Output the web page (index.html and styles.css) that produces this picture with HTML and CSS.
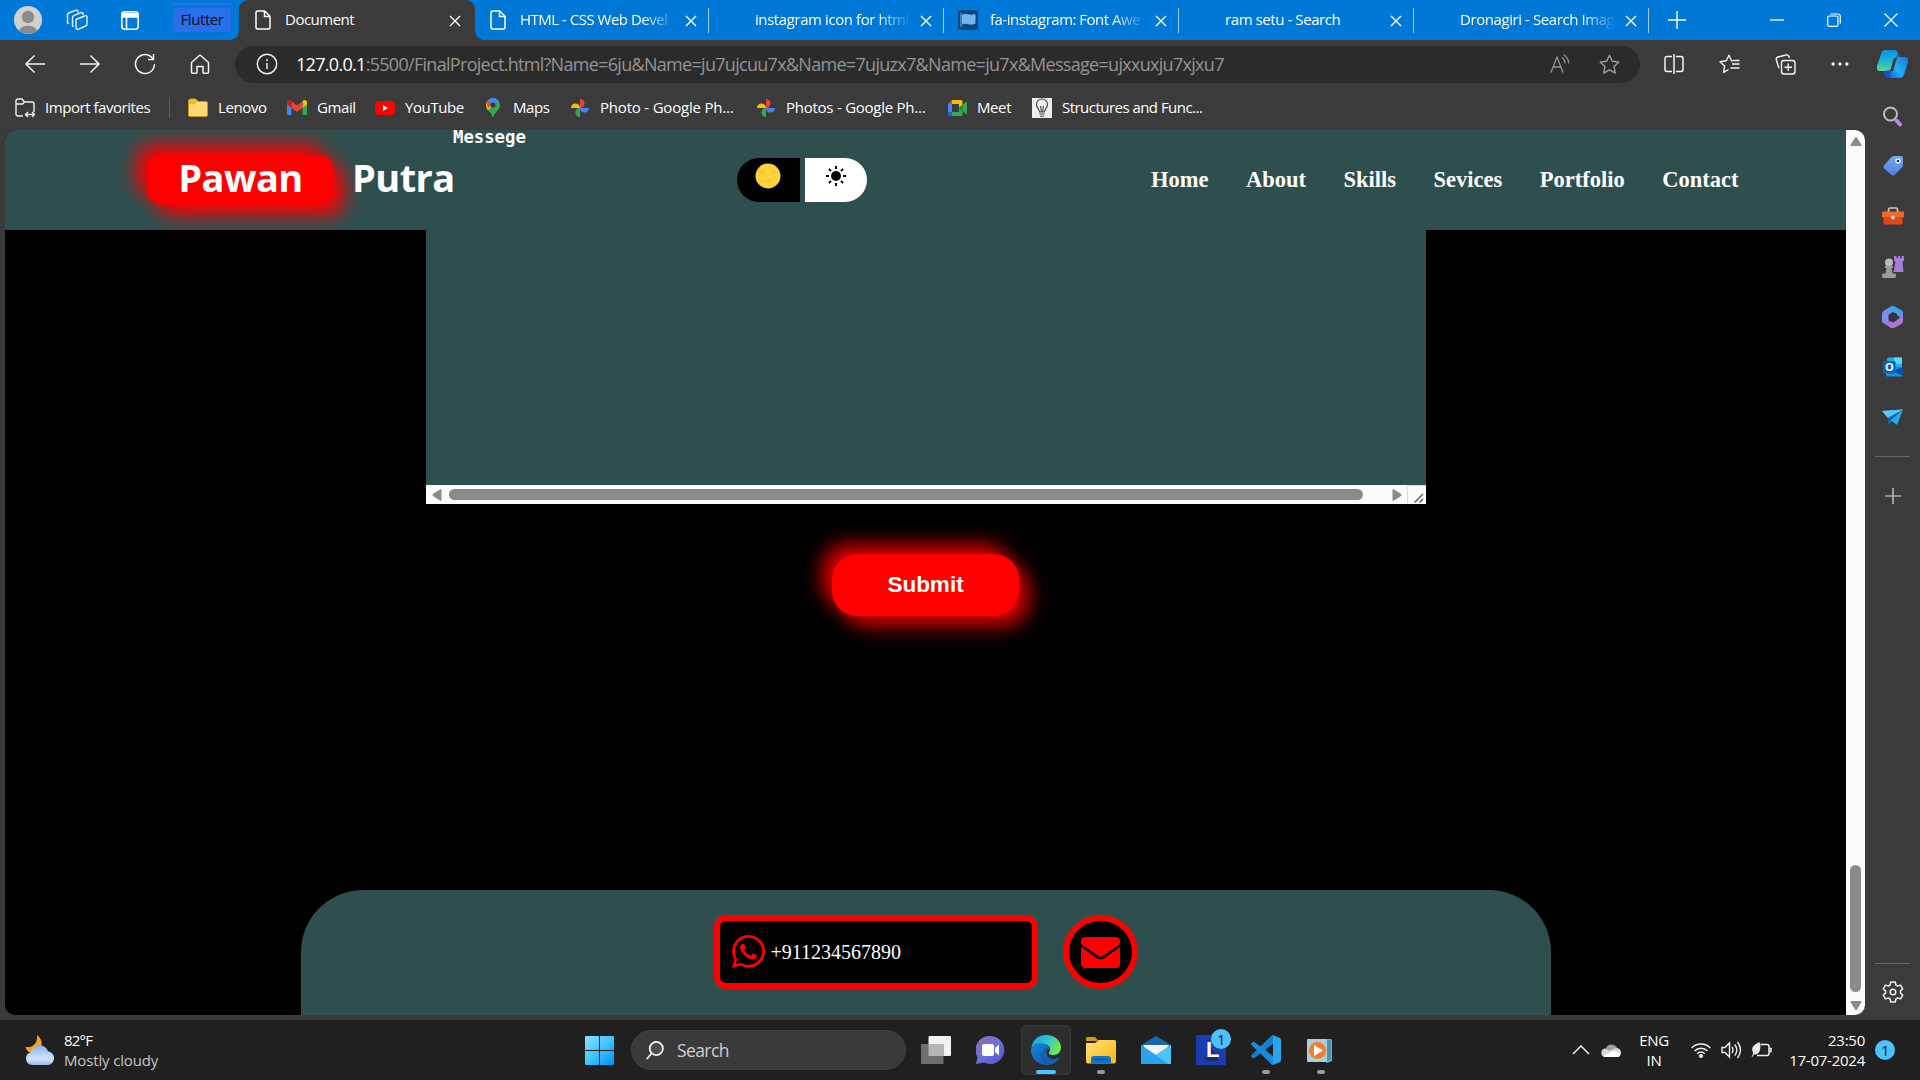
FILE: index.html
```html
<!DOCTYPE html>
<html lang="en">
<head>
<meta charset="utf-8">
<title>Document</title>
<link rel="stylesheet" href="styles.css">
</head>
<body>
<svg class="defs" width="0" height="0">
  <defs>
    <linearGradient id="gWin" x1="0" y1="0" x2="1" y2="1"><stop offset="0" stop-color="#8be3ff"/><stop offset=".5" stop-color="#3fc4ff"/><stop offset="1" stop-color="#0091f8"/></linearGradient>
    <linearGradient id="gEdgeA" x1="0" y1="0" x2="1" y2=".4"><stop offset="0" stop-color="#1b9de2"/><stop offset=".55" stop-color="#2cc3d5"/><stop offset="1" stop-color="#6fe856"/></linearGradient>
    <linearGradient id="gEdgeB" x1="0" y1="0" x2=".7" y2="1"><stop offset="0" stop-color="#1688d8"/><stop offset="1" stop-color="#0f5bb0"/></linearGradient>
    <linearGradient id="gChat" x1="0" y1="0" x2="1" y2="1"><stop offset="0" stop-color="#9a67a8"/><stop offset=".5" stop-color="#6a72dd"/><stop offset="1" stop-color="#5a4fc8"/></linearGradient>
    <linearGradient id="gCloud" x1="0" y1="0" x2="0" y2="1"><stop offset="0" stop-color="#8db4f5"/><stop offset=".7" stop-color="#d3e2fa"/><stop offset="1" stop-color="#94b5ee"/></linearGradient>
    <linearGradient id="gFolder" x1="0" y1="0" x2="1" y2="1"><stop offset="0" stop-color="#ffe07a"/><stop offset="1" stop-color="#f8b70c"/></linearGradient>
    <linearGradient id="gCopA" x1="0" y1="0" x2="0" y2="1"><stop offset="0" stop-color="#0f8fe0"/><stop offset=".5" stop-color="#18b2d8"/><stop offset="1" stop-color="#5fd68d"/></linearGradient>
    <linearGradient id="gCopB" x1="1" y1="0" x2="0" y2="1"><stop offset="0" stop-color="#1d72e0"/><stop offset=".6" stop-color="#20b2f8"/><stop offset="1" stop-color="#1b62e8"/></linearGradient>
    <linearGradient id="gTag" x1="0" y1="0" x2="0" y2="1"><stop offset="0" stop-color="#7aa7f0"/><stop offset="1" stop-color="#4f7fd9"/></linearGradient>
    <symbol id="x" viewBox="0 0 12 12"><path d="M1 1l10 10M11 1L1 11" fill="none" stroke="#fff" stroke-width="1.4"/></symbol>
    <symbol id="doc" viewBox="0 0 16 20"><path d="M2.5 1h7.2L15 6.2v11.3a1.5 1.5 0 0 1-1.5 1.5h-11A1.500 1.500 0 0 1 1 17.500v-15A1.500 1.500 0 0 1 2.500 1zM9.500 1v5.500H15" fill="none" stroke="#fff" stroke-width="1.500"/></symbol>
    <symbol id="mag" viewBox="0 0 20 20"><circle cx="8.500" cy="8.500" r="5" fill="none" stroke="#0474d1" stroke-width="1.600"/><path d="M12.500 12.500l5 5" stroke="#0474d1" stroke-width="1.600"/></symbol>
    <symbol id="photos" viewBox="0 0 20 20"><path d="M10 10V1a4.500 4.500 0 0 1 0 9z" fill="#ea4335"/><path d="M10 10h9a4.500 4.500 0 0 1-9 0z" fill="#4285f4"/><path d="M10 10v9a4.500 4.500 0 0 1 0-9z" fill="#34a853"/><path d="M10 10H1a4.500 4.500 0 0 1 9 0z" fill="#fbbc04"/></symbol>
  </defs>
</svg>

<div class="browser">
  <header class="tabstrip">
    <div class="profile"><svg width="28" height="28" viewBox="0 0 28 28"><circle cx="14" cy="14" r="14" fill="#d3d1ce"/><circle cx="14" cy="11" r="6.200" fill="#8d8b89"/><path d="M5 24.500a9.500 7 0 0 1 18 0A14 14 0 0 1 5 24.500z" fill="#8d8b89"/></svg></div>
    <div class="strip-btn"><svg width="22" height="22" viewBox="0 0 22 22" fill="none" stroke="#e8f3ff" stroke-width="1.400" stroke-linejoin="round"><path d="M10 10.500l8.500-3.500a1.500 1.500 0 0 1 2.500 1v7a2 2 0 0 1-1.500 2L12 20.300a1.500 1.500 0 0 1-2-1.300z"/><path d="M7.500 17.500l-1-.5V8.500a2 2 0 0 1 1.200-1.800L15 3.600a1.500 1.500 0 0 1 2 1V6"/><path d="M3 14.500l-1.500-.6V5.800A2 2 0 0 1 2.700 4L10 1.200a1.500 1.500 0 0 1 2 1V3.500"/></svg></div>
    <div class="strip-btn"><svg width="18" height="19" viewBox="0 0 18 19" fill="none" stroke="#fff" stroke-width="1.600"><rect x=".8" y=".8" width="16.400" height="17.400" rx="3"/><path d="M1 2.500h16V6H1z" fill="#fff"/><path d="M5.500 6v12"/></svg></div>
    <div class="group"><span>Flutter</span></div>
    <div class="tab active"><svg width="16" height="20"><use href="#doc"/></svg><span class="tab-title">Document</span><svg class="close" width="12" height="12"><use href="#x"/></svg></div>
    <div class="tab plain"><svg width="16" height="20"><use href="#doc"/></svg><span class="tab-title fade">HTML - CSS Web Devel</span><svg class="close" width="12" height="12"><use href="#x"/></svg></div>
    <div class="tab"><svg width="20" height="20"><use href="#mag"/></svg><span class="tab-title fade">instagram icon for html</span><svg class="close" width="12" height="12"><use href="#x"/></svg></div>
    <div class="tab"><svg width="20" height="20" viewBox="0 0 20 20"><rect width="20" height="20" rx="3" fill="#0a4584"/><path d="M3 3v14M4.500 5c4-2 6 1.500 12.500-.5v9c-6 2-8.500-1.500-12.500.5z" fill="#74b5ee" stroke="#74b5ee"/></svg><span class="tab-title fade">fa-instagram: Font Awe</span><svg class="close" width="12" height="12"><use href="#x"/></svg></div>
    <div class="tab"><svg width="20" height="20"><use href="#mag"/></svg><span class="tab-title">ram setu - Search</span><svg class="close" width="12" height="12"><use href="#x"/></svg></div>
    <div class="tab"><svg width="20" height="20"><use href="#mag"/></svg><span class="tab-title fade">Dronagiri - Search Imag</span><svg class="close" width="12" height="12"><use href="#x"/></svg></div>
    <div class="new-tab"><svg width="18" height="18" viewBox="0 0 18 18"><path d="M9 0v18M0 9h18" stroke="#fff" stroke-width="1.400"/></svg></div>
    <div class="window-controls">
      <svg width="14" height="14" viewBox="0 0 14 14"><path d="M0 7h14" stroke="#fff" stroke-width="1.300"/></svg>
      <svg width="14" height="14" viewBox="0 0 14 14" fill="none" stroke="#fff" stroke-width="1.200"><rect x=".7" y="3" width="10.300" height="10.300" rx="1.500"/><path d="M3.500 1h7.500a2.300 2.300 0 0 1 2.300 2.300v7.200"/></svg>
      <svg width="14" height="14" viewBox="0 0 14 14"><path d="M.5.5l13 13M13.500.5l-13 13" stroke="#fff" stroke-width="1.200"/></svg>
    </div>
  </header>

  <div class="toolbar">
    <div class="tool"><svg width="22" height="20" viewBox="0 0 22 20" fill="none" stroke="#f4f4f4" stroke-width="1.500"><path d="M21 10H2M10.500 1.500L2 10l8.500 8.500"/></svg></div>
    <div class="tool"><svg width="22" height="20" viewBox="0 0 22 20" fill="none" stroke="#f4f4f4" stroke-width="1.500"><path d="M1 10h19M11.500 1.500L20 10l-8.500 8.500"/></svg></div>
    <div class="tool"><svg width="22" height="22" viewBox="0 0 22 22" fill="none" stroke="#f4f4f4" stroke-width="1.500"><path d="M20.500 11A9.500 9.500 0 1 1 17 3.700L19.300 6M19.500 1v5.500H14"/></svg></div>
    <div class="tool"><svg width="20" height="22" viewBox="0 0 20 22" fill="none" stroke="#f4f4f4" stroke-width="1.500" stroke-linejoin="round"><path d="M1.500 9.500L10 2l8.500 7.500V19a1.300 1.300 0 0 1-1.300 1.300h-3A1.200 1.200 0 0 1 13 19v-5.500H7V19a1.200 1.200 0 0 1-1.200 1.300h-3A1.300 1.300 0 0 1 1.500 19z"/></svg></div>
    <div class="omnibox">
      <svg class="info" width="22" height="22" viewBox="0 0 22 22" fill="none" stroke="#eee" stroke-width="1.500"><circle cx="11" cy="11" r="9.700"/><path d="M11 10v6M11 6v2"/></svg>
      <div class="url"><b>127.0.0.1</b>:5500/FinalProject.html?Name=6ju&amp;Name=ju7ujcuu7x&amp;Name=7ujuzx7&amp;Name=ju7x&amp;Message=ujxxuxju7xjxu7</div>
      <div class="omni-icons">
        <svg width="20" height="20" viewBox="0 0 20 20" fill="none" stroke="#949494" stroke-width="1.300"><path d="M1 18.500L7 3l6 15.500M3 13h8M12 3.500q3 2 3 6M13.500.8q5 3 5.200 8.700"/></svg>
        <svg width="21" height="21" viewBox="0 0 20 20" fill="none" stroke="#a0a0a0" stroke-width="1.300" stroke-linejoin="round"><path d="M10 1.200l2.700 5.700 6.200.8-4.600 4.300 1.200 6.200L10 15.200l-5.500 3L5.700 12 1.100 7.700l6.200-.8z"/></svg>
      </div>
    </div>
    <div class="tools-right">
      <div class="tool"><svg width="20" height="20" viewBox="0 0 20 20" fill="none" stroke="#f4f4f4" stroke-width="1.500"><path d="M8 2.500H3A2 2 0 0 0 1 4.500v11a2 2 0 0 0 2 2h5M12 2.500h5a2 2 0 0 1 2 2v11a2 2 0 0 1-2 2h-5M10 0v20"/></svg></div>
      <div class="tool"><svg width="21" height="20" viewBox="0 0 21 20" fill="none" stroke="#f4f4f4" stroke-width="1.400" stroke-linejoin="round"><path d="M14 7l-1.500-.2L10 1.200 7.300 6.800 1 7.700l4.600 4.400-1 6.300L9.500 15.500M13 10h7.500M11.500 14h9M14 6.500h6.500"/></svg></div>
      <div class="tool"><svg width="21" height="21" viewBox="0 0 21 21" fill="none" stroke="#f4f4f4" stroke-width="1.400"><rect x="6.500" y="6.500" width="13.500" height="13.500" rx="2.500"/><path d="M13.200 9.500v7.500M9.500 13.200H17M4 14.300L1.200 5.500A2.500 2.500 0 0 1 2.800 3L11 1a2.500 2.500 0 0 1 3 1.700l.3 1.300"/></svg></div>
      <div class="tool"><svg width="18" height="6" viewBox="0 0 18 6" fill="#f4f4f4"><circle cx="2.200" cy="3" r="1.700"/><circle cx="9" cy="3" r="1.700"/><circle cx="15.800" cy="3" r="1.700"/></svg></div>
    </div>
    <div class="tool copilot"><svg width="31" height="28" viewBox="0 0 31 28"><path d="M15 1q6-3 8 7h5q4 0 2.500 5L27 24q-1 4-6 4h-9q-4 0-5-5z" fill="#0869c4"/><path d="M8 0h9c3 0 4 2 3 5l-4 12c-1 3-3 4-6 4H3c-3 0-3.500-2-3-5L4 4c.8-3 2-4 4-4z" fill="url(#gCopA)"/><path d="M8 21l5-1-1 8q-4 0-5-5z" fill="#1a4ed0"/><path d="M22 7h6c3 0 3.500 2 3 5l-4 12c-1 3-3 4-5 4h-9l5-17c1-3 2-4 4-4z" fill="url(#gCopB)"/><path d="M17 8h3l-4 13h-3z" fill="#3b3b3b"/></svg></div>
  </div>

  <div class="workspace">
    <div class="left-column">
      <nav class="bookmarks">
        <div class="bm import"><svg width="20" height="20" viewBox="0 0 20 20" fill="none" stroke="#f2f2f2" stroke-width="1.400"><path d="M8 18H3a2 2 0 0 1-2-2V3a2 2 0 0 1 2-2h4l2.500 3L7.500 6H1M9 4h8a2 2 0 0 1 2 2v8M10.500 16.500h9M13 14l-2.500 2.500L13 19M17 14l2.500 2.500L17 19"/></svg><span>Import favorites</span></div>
        <div class="bm lenovo"><svg width="20" height="19" viewBox="0 0 20 19"><path d="M.5 3A2 2 0 0 1 2.500 1h5L10 3.500H18a1.500 1.500 0 0 1 1.500 1.500v12a1.500 1.500 0 0 1-1.500 1.500H2A1.500 1.500 0 0 1 .5 17z" fill="#ffda72" stroke="#c9961c"/><path d="M.8 6H7l3-2.500L7.500 1h-5A2 2 0 0 0 .8 3z" fill="#f1b92c"/></svg><span>Lenovo</span></div>
        <div class="bm gmail"><svg width="20" height="15" viewBox="0 0 20 15"><path d="M0 2v11.500A1.500 1.500 0 0 0 1.500 15H4.500V5z" fill="#4285f4"/><path d="M20 2v11.500a1.500 1.500 0 0 1-1.500 1.500h-3V5z" fill="#34a853"/><path d="M15.500 1.300V8L20 4.600V2.200c0-2-2.400-2.900-4-1.600z" fill="#fbbc04"/><path d="M4.500 8V1.300L10 5.500l5.500-4.200V8L10 12z" fill="#ea4335"/><path d="M0 2.200v2.400L4.500 8V1.300L4 .6C2.400-.7 0 .2 0 2.200z" fill="#c5221f"/></svg><span>Gmail</span></div>
        <div class="bm youtube"><svg width="20" height="14" viewBox="0 0 20 14"><rect width="20" height="14" rx="3.500" fill="#f00"/><path d="M8 4v6l5-3z" fill="#fff"/></svg><span>YouTube</span></div>
        <div class="bm maps"><svg width="14" height="20" viewBox="0 0 14 20"><path d="M7 0a7 7 0 0 1 7 7c0 5-5 6-7 13C5 13 0 12 0 7a7 7 0 0 1 7-7z" fill="#34a853"/><path d="M0 7a7 7 0 0 1 1.700-4.600L7 7l-5 5.500Q0 10 0 7z" fill="#fbbc04"/><path d="M1.700 2.400A7 7 0 0 1 13 3.500L7 8z" fill="#4285f4"/><path d="M.5 4.300l1.500-2L6 6.500 2 10z" fill="#ea4335"/><circle cx="7" cy="7" r="2.500" fill="#3b3b3b"/></svg><span>Maps</span></div>
        <div class="bm photo"><svg width="20" height="20"><use href="#photos"/></svg><span>Photo - Google Ph...</span></div>
        <div class="bm photos"><svg width="20" height="20"><use href="#photos"/></svg><span>Photos - Google Ph...</span></div>
        <div class="bm meet"><svg width="19" height="16" viewBox="0 0 19 16"><path d="M0 4l4-4v4z" fill="#ea4335"/><path d="M4 0h9a1.500 1.500 0 0 1 1.500 1.500V8H11V4H4z" fill="#fbbc04"/><path d="M0 4h4v8H0z" fill="#4285f4"/><path d="M0 12h4v4H1.500A1.500 1.500 0 0 1 0 14.500z" fill="#1967d2"/><path d="M4 12h7V8l3.500-3L18 2q1-.5 1 .5v11q0 1-1 .5l-3.500-3v3.500A1.500 1.500 0 0 1 13 16H4z" fill="#34a853"/><path d="M11 8l3.500-3v6z" fill="#188038"/></svg><span>Meet</span></div>
        <div class="bm structures"><svg width="20" height="20" viewBox="0 0 20 20"><path d="M0 0h20v20H0z" fill="#eee"/><path d="M7.500 14c0-3-3-4-3-7.500a5.500 5.500 0 0 1 11 0c0 3.500-3 4.500-3 7.500zM8.500 8l1 6M11.500 8l-1 6M7.500 16h5M8 18.200h4" fill="none" stroke="#39444d" stroke-width="1.100"/></svg><span>Structures and Func...</span></div>
      </nav>

      <div class="viewport">
        <div class="page">
          <nav class="site-nav">
            <div class="logo"><span class="pawan">Pawan</span><span class="putra">Putra</span></div>
            <div class="theme-toggle">
              <div class="dark"><svg width="26" height="26" viewBox="0 0 26 26"><circle cx="13" cy="13" r="12.500" fill="#fdd23b"/><g fill="#f8c534"><circle cx="7" cy="9.500" r="3"/><circle cx="18.500" cy="8.500" r="2.200"/><circle cx="13.500" cy="18" r="2.300"/><circle cx="6.500" cy="18.500" r="1.600"/><circle cx="14" cy="3" r="1.300"/></g></svg></div>
              <div class="light"><svg width="20" height="20" viewBox="0 0 20 20"><circle cx="10" cy="10" r="5"/><path d="M10 0v3M10 17v3M0 10h3M17 10h3M2.900 2.900L5 5M15 15l2.100 2.100M17.100 2.900L15 5M2.900 17.100L5 15" stroke="#000" stroke-width="2"/></svg></div>
            </div>
            <ul class="links"><li>Home</li><li>About</li><li>Skills</li><li>Sevices</li><li>Portfolio</li><li>Contact</li></ul>
            <div class="field-label">Messege</div>
          </nav>
          <div class="textarea">
            <div class="textarea-body"></div>
            <div class="hscroll">
              <svg width="10" height="14" viewBox="0 0 10 14"><path d="M9 1.500v11L1.500 8q-1-1 0-2z" fill="#8b8b8b" stroke="#8b8b8b"/></svg>
              <div class="hthumb"></div>
              <svg class="arrow-right" width="10" height="14" viewBox="0 0 10 14"><path d="M1 1.500v11L8.500 8q1-1 0-2z" fill="#8b8b8b" stroke="#8b8b8b"/></svg>
              <div class="grip"><svg width="10" height="10" viewBox="0 0 10 10"><path d="M.5 9.500l8.500-8.500M5.500 9.500l3.500-3.500" stroke="#555" stroke-width="1.400"/></svg></div>
            </div>
          </div>
          <div class="submit">Submit</div>
          <footer class="footer">
            <div class="phone"><svg width="33" height="33" viewBox="0 0 448 448"><path fill="#f00" d="M380.900 65.100C339 23.100 283.200 0 223.900 0 101.500 0 1.900 99.600 1.900 222c0 39.100 10.200 77.300 29.600 111L0 448l117.700-30.900c32.400 17.700 68.900 27 106.100 27h.1c122.300 0 224.100-99.600 224.100-222 0-59.300-25.200-115-67.100-157zm-157 341.600c-33.200 0-65.700-8.900-94-25.700l-6.700-4-69.800 18.300L72 327.200l-4.400-7c-18.500-29.400-28.200-63.300-28.200-98.200 0-101.700 82.800-184.500 184.600-184.500 49.300 0 95.600 19.200 130.400 54.100 34.800 34.900 56.200 81.200 56.100 130.500 0 101.800-84.900 184.600-186.600 184.600zm101.200-138.200c-5.500-2.800-32.800-16.200-37.900-18-5.100-1.900-8.800-2.800-12.500 2.800-3.700 5.600-14.300 18-17.600 21.800-3.200 3.700-6.500 4.200-12 1.400-32.600-16.300-54-29.100-75.500-66-5.700-9.800 5.700-9.100 16.300-30.300 1.800-3.700.9-6.900-.5-9.700-1.400-2.800-12.500-30.100-17.100-41.200-4.500-10.800-9.100-9.300-12.500-9.500-3.200-.2-6.900-.2-10.600-.2-3.700 0-9.700 1.400-14.800 6.900-5.100 5.600-19.400 19-19.400 46.300 0 27.300 19.900 53.700 22.600 57.400 2.800 3.700 39.100 59.700 94.800 83.800 35.200 15.200 49 16.500 66.600 13.900 10.700-1.600 32.800-13.400 37.400-26.400 4.600-13 4.600-24.100 3.200-26.400-1.300-2.500-5-3.900-10.500-6.600z"/></svg><span>+911234567890</span></div>
            <div class="mail"><svg width="39" height="31" viewBox="0 0 39 31" fill="#f00"><path d="M4 0h31a4 4 0 0 1 4 4v1.500q0 1.500-1.500 2.600L22.500 18.500q-3 2-6 0L1.500 8.100Q0 7 0 5.500V4a4 4 0 0 1 4-4z"/><path d="M0 10l15.500 11q4 2.500 8 0L39 10v17a4 4 0 0 1-4 4H4a4 4 0 0 1-4-4z"/></svg></div>
          </footer>
        </div>
        <div class="vscroll">
          <svg width="14" height="11" viewBox="0 0 14 11"><path d="M2 10h10q1 0 .5-1L8 1.500q-1-1-2 0L1.500 9q-.5 1 .5 1z" fill="#8b8b8b"/></svg>
          <div class="vthumb"></div>
          <svg width="14" height="11" viewBox="0 0 14 11"><path d="M2 1h10q1 0 .5 1L8 9.500q-1 1-2 0L1.500 2Q1 1 2 1z" fill="#8b8b8b"/></svg>
        </div>
      </div>
    </div>

    <aside class="sidebar">
      <div class="side"><svg width="21" height="21" viewBox="0 0 21 21"><circle cx="8.500" cy="8" r="6.500" fill="none" stroke="#bdbdbd" stroke-width="2"/><path d="M14.500 14.500l3.500 4" stroke="#bf86ee" stroke-width="4" stroke-linecap="round"/></svg></div>
      <div class="side"><svg width="22" height="22" viewBox="0 0 22 22"><path d="M10 1.500Q11 1 12 1h7q2 0 2 2v7q0 1.500-1 2.500l-7.500 7.500q-1.500 1.500-3 0l-7.500-6.500q-1.500-1.500 0-3z" fill="url(#gTag)"/><circle cx="16" cy="6" r="2" fill="#222" stroke="#e7effc" stroke-width="1.400"/></svg></div>
      <div class="side"><svg width="22" height="18" viewBox="0 0 22 18"><path d="M6.500 5V2.500Q6.500 1 8 1h6q1.500 0 1.500 1.500V5" fill="none" stroke="#c4c4c4" stroke-width="1.700"/><rect y="4.500" width="22" height="6" rx="1" fill="#f06a2c"/><path d="M1.500 10.500h19V16q0 1.500-1.500 1.500H3q-1.500 0-1.500-1.500z" fill="#dc4a12"/><circle cx="11" cy="10.500" r="2" fill="#cfcfcf"/></svg></div>
      <div class="side"><svg width="22" height="22" viewBox="0 0 22 22"><path d="M12 0h2.500v2H16V0h2v2h1.500V0H22v4.500l-1.500 1.500L21.500 16h-10L13.500 6 12 4.500z" fill="#a77be0"/><circle cx="7" cy="6.500" r="4" fill="#bababa"/><path d="M3 10h8v2H9.500l1 5.500H13q1 0 1 2T13 22H1q-1 0-1-2.500t1-2h2.500l1-5.500H3z" fill="#9c9c9c"/></svg></div>
      <div class="side"><svg width="21" height="22" viewBox="0 0 21 22"><path d="M10 0L2 4.500Q0 6 0 8v8l3 2 4-3V8.500l7-4.500z" fill="#7a8ff0"/><path d="M10 0q1-.5 2 0l8 4.500q1 .8 1 2.500v6l-6-4V8L8 4.500z" fill="#3ba3e8"/><path d="M21 7v8q0 2-1.500 3L12 22q-1.500.5-3 0l-7-4.500L9 14.500l3 1.500 5-3.500z" fill="#ad75d8"/><path d="M10.500 6.500l4.500 2.500v5l-4.500 2.500L6.500 14V9z" fill="#353535"/></svg></div>
      <div class="side"><svg width="20" height="20" viewBox="0 0 20 20"><path d="M4 2q0-1.500 1.500-1.500h12Q19 .5 19 2v10H4z" fill="#28a8ea"/><path d="M11 .5h8V7h-8z" fill="#50d9ff"/><path d="M3 10l17 0v8q0 1.500-1.500 1.500H4.500Q3 19.500 3 18z" fill="#1490df"/><path d="M20 10v9L10 14z" fill="#0a4f9c"/><rect y="4" width="12.500" height="12.500" rx="1.500" fill="#0a64bd"/><text x="6.200" y="14" text-anchor="middle" class="outlook-letter">O</text></svg></div>
      <div class="side"><svg width="21" height="16" viewBox="0 0 21 16"><path d="M0 2L21 .5 15 16l-5.500-4L6 15.500V9z" fill="#26a9e8"/><path d="M0 2L21 .5 6 9z" fill="#58c9fa"/><path d="M21 .5L6 9v6.500L9 11z" fill="#0b5fae"/></svg></div>
      <div class="rule"></div>
      <div class="side plus"><svg width="16" height="16" viewBox="0 0 16 16"><path d="M8 0v16M0 8h16" stroke="#ddd" stroke-width="1.200"/></svg></div>
      <div class="side-bottom">
        <div class="rule"></div>
        <svg width="22" height="22" viewBox="0 0 22 22" fill="none" stroke="#efefef" stroke-width="1.500" stroke-linejoin="round"><circle cx="11" cy="11" r="2.800"/><path d="M8.800 1h4.400l.7 3 1.700 1 3-.9 2.100 3.800L18.400 10v2l2.300 2.100-2.100 3.800-3-.9-1.700 1-.7 3H8.800l-.7-3-1.700-1-3 .9-2.100-3.800L3.600 12v-2L1.300 7.900l2.100-3.800 3 .9 1.700-1z"/></svg>
      </div>
    </aside>
  </div>
</div>

<div class="taskbar">
  <div class="weather">
    <svg width="30" height="30" viewBox="0 0 30 30"><path d="M12 0c7 5 6 15-2 18-4 1-8-1-9.500-6C7 13 13 9 12 0z" fill="#f5a31c"/><path d="M7 30a6.500 6.500 0 0 1-1-12.800 9 9 0 0 1 17-1A7 7 0 0 1 23.500 30z" fill="url(#gCloud)"/></svg>
    <div class="weather-text"><div>82°F</div><div class="dim">Mostly cloudy</div></div>
  </div>
  <div class="apps">
    <div class="app"><svg width="29" height="29" viewBox="0 0 29 29" fill="url(#gWin)"><path d="M1 0h13v14H0V1q0-1 1-1zM15 0h13q1 0 1 1v13H15zM0 15h14v14H1q-1 0-1-1zM15 15h14v13q0 1-1 1H15z"/></svg></div>
    <div class="search"><svg width="18" height="19" viewBox="0 0 18 19" fill="none" stroke="#eee" stroke-width="1.900"><circle cx="10.300" cy="7.500" r="6.600" fill="#4c4c4c"/><path d="M5.500 12.500L.8 18"/></svg><span>Search</span></div>
    <div class="app taskview"><svg width="30" height="28" viewBox="0 0 30 28"><rect x="7.500" width="22.500" height="20" rx="1" fill="#f1f1f1"/><rect y="8" width="22.500" height="20" rx="1" fill="#6e6e6e"/><path d="M7.500 8h15v12h-15z" fill="#b5b5b5"/></svg></div>
    <div class="app"><svg width="29" height="28" viewBox="0 0 29 28"><path d="M14.500 0A14 14 0 1 1 8 26.500L0 28l1.500-7A14 14 0 0 1 14.500 0z" fill="url(#gChat)"/><rect x="6" y="8" width="12" height="12" rx="2" fill="#fff"/><path d="M19 12l4-3.500v11L19 16z" fill="#fff"/></svg></div>
    <div class="app current"><svg width="30" height="30" viewBox="0 0 30 30"><path d="M.5 14C1 5 7 0 15 0c9 0 15 6 15 12.500 0 5-4 7.500-8 7.500-3 0-5-1-4-2.500 3-4-.5-8.500-5-8.500C7 8 2 10 .5 14z" fill="url(#gEdgeA)"/><path d="M0 15C1 9 7 7.500 12 8.500c4 .8 6 3 6.500 5.500-2-2-8 0-8 6 0 4 4 9 9 9.500-2 .5-3 .5-4.500.5C6 30 0 23 0 15z" fill="url(#gEdgeB)"/><path d="M17.500 13c-5-1-8 4-6.500 9 1.500 4.500 6 8 10 7 4-1 6.500-4.500 7.500-6.500-5 3-13 1-13-5 0-2 .5-3.500 2-4.500z" fill="#1560b5"/></svg><i></i></div>
    <div class="app open"><svg width="30" height="27" viewBox="0 0 30 27"><path d="M0 1.500Q0 0 1.500 0H9l3.500 4H0z" fill="#d99a07"/><path d="M0 6h9l4-3h15.500Q30 3 30 4.500v20q0 2-2 2H2q-2 0-2-2z" fill="url(#gFolder)"/><path d="M5 26.500V22q0-3 3-3h14q3 0 3 3v4.500z" fill="#1673c8"/><path d="M8.500 22.500h13" stroke="#0a4a8c" stroke-width="1.200"/></svg><i></i></div>
    <div class="app"><svg width="30" height="28" viewBox="0 0 30 28"><path d="M0 9L15 0l15 9v3H0z" fill="#1566ad"/><path d="M2 9h26l-7 10H8z" fill="#f3f3f3"/><path d="M0 9l15 10L30 9v19H0z" fill="#28a5ea"/><path d="M15 19L30 9v19h-3z" fill="#4bc5f5"/></svg></div>
    <div class="app badge-host"><svg width="30" height="30" viewBox="0 0 30 30"><path d="M0 0h30v30H0z" fill="#1b3cae"/><path d="M11 7v16H7l4 3h11v-3z" fill="#142b75"/><text x="10" y="22" class="app-letter">L</text></svg><span class="badge">1</span></div>
    <div class="app open"><svg width="30" height="30" viewBox="0 0 30 30"><path d="M22 0l7 3q1 .5 1 2v20q0 1.500-1 2l-7 3z" fill="#29a3f2"/><path d="M22 0v9L3.500 23q-1 .7-2 0L.3 21.700q-.7-.8 0-1.500L20.500.7Q21 0 22 0z" fill="#1280ce"/><path d="M22 30v-9L3.500 7q-1-.7-2 0L.3 8.300q-.7.800 0 1.500L20.500 29.300q.5.700 1.500.7z" fill="#168bdb"/></svg><i></i></div>
    <div class="app open media"><svg width="25" height="25" viewBox="0 0 25 25"><path d="M19 1h5l1 1v21l-5 2-2-2z" fill="#6cb2cf"/><rect y="1" width="20" height="23" rx="1" fill="#a9cfdf"/><path d="M21 2v21M23 2v20" stroke="#326e8c"/><circle cx="10.500" cy="12.500" r="8.500" fill="#f27d2c"/><path d="M7 7l9 5.500L7 18z" fill="#fff"/></svg><i></i></div>
  </div>
  <div class="tray">
    <svg class="t-chevron" width="18" height="10" viewBox="0 0 18 10" fill="none" stroke="#eee" stroke-width="1.500"><path d="M1 9l8-8 8 8"/></svg>
    <svg class="t-cloud" width="20" height="14" viewBox="0 0 20 14"><path d="M5 5a6 6 0 0 1 11 0l1 4H4z" fill="#9d9d9d"/><path d="M4 14a4.300 4.300 0 0 1 0-8.500L8 7.500 15 5a4.500 4.500 0 0 1 1 9z" fill="#d8d8d8"/><path d="M2 13l11-5.500 6.500 3A3.500 3.500 0 0 1 16 14H4z" fill="#fff"/></svg>
    <div class="lang">ENG<br>IN</div>
    <svg class="t-wifi" width="20" height="16" viewBox="0 0 20 16" fill="none" stroke="#eee" stroke-width="1.500"><path d="M.7 6a13 13 0 0 1 18.600 0M3.500 9a9 9 0 0 1 13 0M6.300 11.700a5 5 0 0 1 7.400 0"/><circle cx="10" cy="14" r="1.300" fill="#eee"/></svg>
    <svg class="t-sound" width="21" height="18" viewBox="0 0 21 18" fill="none" stroke="#eee" stroke-width="1.400"><path d="M1 6.500h3L8.500 2v14L4 11.500H1zM11 6q2 3 0 6M13.800 3.500q4 5.500 0 11M16.500 1q6 8 0 16"/></svg>
    <svg class="t-battery" width="21" height="16" viewBox="0 0 21 16" fill="none" stroke="#eee" stroke-width="1.500"><path d="M9.500 2.500H16a2 2 0 0 1 2 2v7a2 2 0 0 1-2 2H6M18.500 6.500h1.500v3h-1.500"/><path d="M8.500.5q1.500 5.500-.5 9.500-2 3-5 2l-2 3L2.500 11Q-1.500 4 8.500.5z" fill="#eee" stroke-width=".5"/></svg>
    <div class="clock">23:50<br>17-07-2024</div>
    <div class="notify">1</div>
  </div>
</div>
</body>
</html>
```
FILE: styles.css
```css
* { box-sizing: border-box; }
body {
  margin: 0;
  width: 1920px;
  height: 1080px;
  overflow: hidden;
  display: flex;
  flex-direction: column;
  background: #202020;
  color: #fff;
  font: 15px/20px "Open Sans", "Noto Sans", sans-serif;
  letter-spacing: -0.4px;
}
svg { display: block; flex: none; }
.defs { position: absolute; }

.browser { height: 1020px; display: flex; flex-direction: column; background: #3b3b3b; }

/* tab strip */
.tabstrip { height: 40px; flex: none; display: flex; background: #0078d7; }
.profile { width: 50px; padding: 6px 0 0 14px; }
.strip-btn { width: 53px; display: flex; align-items: center; justify-content: center; }
.group { width: 83px; padding: 3px 8px 8px 17px; }
.group::before { content: ""; display: block; height: 2px; margin-bottom: 3px; background: #2a6fea; }
.group span { display: block; height: 24px; line-height: 22px; border-radius: 4px; background: #2a6fea; color: #0b0b14; text-align: center; }
.tab { width: 235px; flex: none; display: flex; align-items: center; padding: 0 12px 0 13px; border-right: 1px solid transparent; background: linear-gradient(#9fccf2, #9fccf2) right / 1px 25px no-repeat; letter-spacing: -0.5px; }
.tab.active { position: relative; width: 236px; padding: 0 13px 0 16px; background: #3b3b3b; border-radius: 9px 9px 0 0; }
.tab.active::before, .tab.active::after { content: ""; position: absolute; bottom: 0; width: 9px; height: 9px; }
.tab.active::before { left: -9px; background: radial-gradient(circle at 0 0, transparent 8.5px, #3b3b3b 9px); }
.tab.active::after { right: -10px; background: radial-gradient(circle at 100% 0, transparent 8.5px, #3b3b3b 9px); }
.tab.plain { padding-left: 15px; }
.tab-title { flex: 1; min-width: 0; margin: -2px 9px 0 14px; white-space: nowrap; line-height: 24px; }
.tab svg[width="20"] + .tab-title { margin-left: 12px; }
.tab:nth-child(7) .tab-title, .tab:nth-child(9) .tab-title, .tab:nth-child(10) .tab-title { letter-spacing: -0.42px; }
.fade { -webkit-mask-image: linear-gradient(90deg, #000 78%, transparent 100%); mask-image: linear-gradient(90deg, #000 78%, transparent 100%); }
.close { margin-top: 1px; }
.new-tab { width: 54px; display: flex; align-items: center; justify-content: center; }
.window-controls { margin-left: auto; display: flex; align-items: center; gap: 43px; padding-right: 22px; }

/* toolbar */
.toolbar { height: 48px; flex: none; display: flex; align-items: center; padding-left: 7px; }
.tool { width: 55px; flex: none; display: flex; align-items: center; justify-content: center; }
.omnibox { width: 1405px; height: 37px; margin-left: 8px; border-radius: 19px; background: #2b2b2b; display: flex; align-items: center; padding: 0 20px 0 21px; }
.info { margin-right: 18px; }
.url { color: #949494; font-size: 18px; line-height: 24px; letter-spacing: -0.7px; white-space: nowrap; margin-top: -1px; }
.url b { color: #fff; font-weight: 400; }
.omni-icons { display: flex; align-items: center; gap: 29px; margin-left: auto; }
.tools-right { display: flex; margin-left: 7px; }
.tools-right .tool { width: 55.3px; }
.copilot { margin-left: -3px; }

/* bookmarks */
.workspace { flex: 1; min-height: 0; display: flex; }
.left-column { width: 1865px; display: flex; flex-direction: column; padding: 0 0 5px 5px; }
.bookmarks { height: 42px; flex: none; display: flex; align-items: center; padding: 0 0 3px 10px; }
.bm { display: flex; align-items: center; gap: 10px; flex: none; white-space: nowrap; }
.bm span { line-height: 22px; margin-top: -1px; }
.import { width: 155px; border-right: 1px solid #5c5c5c; margin-right: 18px; letter-spacing: -0.45px; }
.lenovo { width: 99px; }
.gmail { width: 88px; }
.youtube { width: 111px; }
.maps { width: 84px; gap: 13px; }
.photo { width: 186px; }
.photos { width: 192px; }
.meet { width: 84px; }
.bm.photo { letter-spacing: -0.2px; }
.bm.photos { letter-spacing: -0.25px; }
.bm.structures { letter-spacing: -0.53px; }

/* page */
.viewport { flex: 1; min-height: 0; display: flex; border-radius: 10px; overflow: hidden; background: #000; }
.page { width: 1841px; display: flex; flex-direction: column; align-items: center; }
.site-nav { position: relative; z-index: 1; width: 100%; height: 100px; flex: none; display: flex; background: #2f4f4f; padding-left: 142px; }
.logo { display: flex; width: 590px; padding-top: 25px; font: 700 38px/44px "Open Sans", sans-serif; letter-spacing: -0.6px; }
.pawan { width: 187px; height: 50px; border-radius: 15px; background: #f00; text-align: center; box-shadow: 10px 10px 20px #f00, -10px -10px 20px #f00; }
.putra { margin-left: 18px; }
.theme-toggle { display: flex; gap: 5px; padding-top: 28px; width: 414px; }
.dark, .light { width: 63px; height: 44px; display: flex; justify-content: center; }
.dark { background: #000; border-radius: 24px 0 0 24px; padding: 5px 1px 0 0; }
.light { width: 62px; background: #fff; border-radius: 0 24px 24px 0; padding: 8px 1px 0 0; }
.links { display: flex; gap: 37.5px; margin: 0; padding: 37px 0 0; list-style: none; font: 700 22.5px/26px "Liberation Serif", serif; letter-spacing: 0; }
.field-label { position: absolute; left: 448px; top: -3px; font: 700 17.3px/20px "DejaVu Sans Mono", monospace; letter-spacing: 0; }
.textarea { width: 1000px; flex: none; margin-left: 1px; }
.textarea-body { height: 255px; background: #2f4f4f; }
.hscroll { height: 19px; display: flex; align-items: center; background: #fcfcfc; padding-left: 6px; }
.hthumb { width: 914px; height: 11px; border-radius: 6px; background: #8b8b8b; margin-left: 7px; }
.arrow-right { margin-left: 29px; }
.grip { width: 19px; height: 19px; border: solid #ddd; border-width: 1px 0 0 1px; margin-left: auto; padding: 7px 0 0 6px; }
.submit { width: 187px; height: 62px; flex: none; margin-top: 50px; border-radius: 25px; background: #f00; text-align: center; font: 700 22.5px/62px "Liberation Sans", sans-serif; letter-spacing: 0; box-shadow: 10px 10px 20px rgba(255,0,0,.85), -10px -10px 20px rgba(255,0,0,.85); }
.footer { width: 1250px; height: 125px; margin-top: auto; border-radius: 62px 62px 0 0; background: #2f4f4f; display: flex; justify-content: center; gap: 25px; padding-top: 25px; }
.phone { width: 324px; height: 74px; border: 6px solid #f00; border-radius: 12px; background: #000; display: flex; align-items: center; gap: 6px; padding: 0 0 1px 12px; font: 20px/24px "Liberation Serif", serif; letter-spacing: 0; }
.mail { width: 75px; height: 74px; border: 6px solid #f00; border-radius: 50%; background: #000; display: flex; align-items: center; justify-content: center; }
.vscroll { width: 19px; display: flex; flex-direction: column; align-items: center; justify-content: flex-end; background: #fcfcfc; padding: 6px 0 4px; }
.vscroll svg:first-child { margin-bottom: auto; }
.vthumb { width: 11px; height: 127px; border-radius: 6px; background: #8b8b8b; margin-bottom: 8px; }

/* sidebar */
.sidebar { width: 55px; display: flex; flex-direction: column; align-items: center; padding-top: 3px; }
.side { height: 50.2px; flex: none; display: flex; align-items: center; justify-content: center; }
.rule { width: 35px; height: 1px; background: #666; margin: 14px 0; }
.outlook-letter { font: 700 11px "Open Sans", sans-serif; fill: #fff; }
.side-bottom { margin-top: auto; display: flex; flex-direction: column; align-items: center; padding-bottom: 17px; }
.side-bottom .rule { margin: 0 0 17px; }

/* taskbar */
.taskbar { height: 60px; display: flex; background: #202020; }
.weather { width: 572px; display: flex; gap: 9px; padding: 10px 0 0 25px; }
.weather svg { margin-top: 5px; }
.weather-text { line-height: 20px; letter-spacing: -0.15px; }
.weather-text div:first-child { letter-spacing: -0.8px; }
.dim { color: #c6c6c6; }
.apps { display: flex; padding-top: 5px; }
.app { position: relative; width: 55px; height: 50px; display: flex; align-items: center; justify-content: center; }
.app i { position: absolute; bottom: 1px; left: 50%; width: 8px; height: 4px; margin-left: -4px; border-radius: 2px; background: #999; }
.current { width: 50px; margin: 0 2px 0 3px; background: #2d2d2d; border: 1px solid #383838; border-radius: 5px; }
.current i { width: 20px; margin-left: -10px; bottom: 0; background: #4cc2ff; }
.search { width: 275px; height: 40px; margin: 5px 2px 0 4px; border-radius: 20px; border: 1px solid #414141; background: #3a3a3a; display: flex; align-items: center; gap: 13px; padding-left: 14px; color: #cfcfcf; font-size: 17.5px; letter-spacing: -0.6px; }
.badge { position: absolute; top: 4px; right: 7px; width: 20px; height: 20px; border-radius: 50%; background: #4cc2ff; color: #111; text-align: center; line-height: 20px; }
.app-letter { font: 700 22px "Liberation Sans", sans-serif; fill: #fff; }
.media svg { margin-right: 3px; }
.tray { flex: 1; display: flex; align-items: center; justify-content: flex-end; padding-right: 25px; }
.t-chevron { margin-right: 11px; }
.t-cloud { margin-right: 18px; }
.lang { width: 30px; text-align: center; margin-right: 22px; line-height: 20px; white-space: nowrap; letter-spacing: -0.3px; }
.t-wifi { margin-right: 10px; }
.t-sound { margin-right: 9px; }
.t-battery { margin-right: 13px; }
.clock { width: 80px; text-align: right; line-height: 20px; white-space: nowrap; letter-spacing: -0.25px; margin-top: -1px; }
.notify { width: 20px; height: 20px; margin-left: 10px; border-radius: 50%; background: #4cc2ff; color: #111; text-align: center; line-height: 20px; }
```
